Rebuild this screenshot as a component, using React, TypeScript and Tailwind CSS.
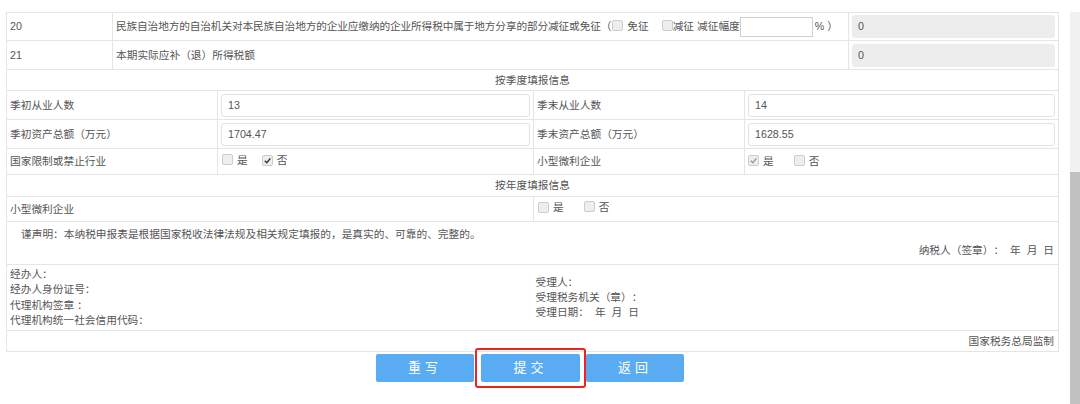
import React from 'react';

const font = { fontFamily: '"Liberation Sans", "Noto Sans CJK SC", sans-serif' };

function Box({ checked = false, dark = false }: { checked?: boolean; dark?: boolean }) {
  return (
    <span className="inline-flex w-[11px] h-[11px] items-center justify-center border border-[#cdcdcd] bg-[#eeeeee] rounded-[2px] align-[-1px]">
      {checked && (
        <svg width="9" height="9" viewBox="0 0 10 10">
          <path
            d="M2 5.2 L4.2 7.4 L8.2 2.6"
            fill="none"
            stroke={dark ? '#333' : '#9a9a9a'}
            strokeWidth="1.6"
          />
        </svg>
      )}
    </span>
  );
}

function Field({ value, grey = false }: { value: string; grey?: boolean }) {
  return (
    <div
      className={`h-[23px] rounded-[3px] px-[6px] flex items-center text-[#555] ${
        grey ? 'bg-[#ededed]' : 'bg-white border border-[#e2e2e2]'
      }`}
    >
      {value}
    </div>
  );
}

const td = 'border border-[#e5e5e5] px-[3px] align-middle';

export default function App() {
  return (
    <div
      className="w-[1080px] h-[404px] flex bg-white text-[10.7px] text-[#555] overflow-hidden [text-spacing-trim:space-all]"
      style={font}
    >
      <div className="w-[1070px] pt-[12px] pl-[6px] pr-[12px]">
        <table className="w-[1052px] table-fixed border-collapse">
          <colgroup>
            <col className="w-[106px]" />
            <col className="w-[105px]" />
            <col className="w-[316px]" />
            <col className="w-[211px]" />
            <col className="w-[104px]" />
            <col className="w-[210px]" />
          </colgroup>
          <tbody>
            {/* 第20、21行 */}
            <tr className="h-[28px]">
              <td className={td}>20</td>
              <td className={td} colSpan={4}>
                <div className="flex items-center whitespace-nowrap">
                  <span className="tracking-[-0.15px]">民族自治地方的自治机关对本民族自治地方的企业应缴纳的企业所得税中属于地方分享的部分减征或免征（</span>
                  <span className="ml-[1px] mr-[4px]"><Box /></span>
                  <span>免征</span>
                  <span className="ml-[13px]"><Box /></span>
                  <span>减征 减征幅度</span>
                  <span className="w-[73px] h-[20px] border border-[#cfcfcf] bg-white" />
                  <span className="ml-[2px]">% ）</span>
                </div>
              </td>
              <td className={td}>
                <Field value="0" grey />
              </td>
            </tr>
            <tr className="h-[29px]">
              <td className={td}>21</td>
              <td className={td} colSpan={4}>本期实际应补（退）所得税额</td>
              <td className={td}>
                <Field value="0" grey />
              </td>
            </tr>

            {/* 按季度填报信息 */}
            <tr className="h-[21px]">
              <td className={`${td} text-center`} colSpan={6}>按季度填报信息</td>
            </tr>
            <tr className="h-[29px]">
              <td className={td} colSpan={2}>季初从业人数</td>
              <td className={td}><Field value="13" /></td>
              <td className={td}>季末从业人数</td>
              <td className={td} colSpan={2}><Field value="14" /></td>
            </tr>
            <tr className="h-[29px]">
              <td className={td} colSpan={2}>季初资产总额（万元）</td>
              <td className={td}><Field value="1704.47" /></td>
              <td className={td}>季末资产总额（万元）</td>
              <td className={td} colSpan={2}><Field value="1628.55" /></td>
            </tr>
            <tr className="h-[26px]">
              <td className={td} colSpan={2}>国家限制或禁止行业</td>
              <td className={td}>
                <span className="inline-flex items-center gap-[4px] -mt-[4px] ml-[1px]">
                  <Box /> <span>是</span>
                  <span className="ml-[10px]"><Box checked dark /></span> <span>否</span>
                </span>
              </td>
              <td className={td}>小型微利企业</td>
              <td className={td} colSpan={2}>
                <span className="inline-flex items-center gap-[4px] -mt-[4px]">
                  <Box checked /> <span>是</span>
                  <span className="ml-[16px]"><Box /></span> <span>否</span>
                </span>
              </td>
            </tr>

            {/* 按年度填报信息 */}
            <tr className="h-[22px]">
              <td className={`${td} text-center`} colSpan={6}>按年度填报信息</td>
            </tr>
            <tr className="h-[25px]">
              <td className={td} colSpan={3}>小型微利企业</td>
              <td className={td} colSpan={3}>
                <span className="inline-flex items-center gap-[4px] -mt-[8px] ml-[1px]">
                  <Box /> <span>是</span>
                  <span className="ml-[16px]"><Box /></span> <span>否</span>
                </span>
              </td>
            </tr>

            {/* 声明 */}
            <tr className="h-[43px]">
              <td className={`${td} align-top pt-[5px] leading-[15px]`} colSpan={6}>
                <div className="pl-[11px]">谨声明：本纳税申报表是根据国家税收法律法规及相关规定填报的，是真实的、可靠的、完整的。</div>
                <div className="text-right pr-[1px] pt-[1px]">纳税人（签章）：&nbsp;&nbsp;年&nbsp;&nbsp;月&nbsp;&nbsp;日</div>
              </td>
            </tr>
            <tr className="h-[66px]">
              <td className="border-y border-l border-[#e5e5e5] px-[3px] leading-[15.3px]" colSpan={3}>
                <div>经办人：</div>
                <div>经办人身份证号：</div>
                <div>代理机构签章&nbsp;：</div>
                <div>代理机构统一社会信用代码：</div>
              </td>
              <td className="border-y border-r border-[#e5e5e5] px-[2px] leading-[15px]" colSpan={3}>
                <div>受理人：</div>
                <div>受理税务机关（章）：</div>
                <div>受理日期：&nbsp;&nbsp;年&nbsp;&nbsp;月&nbsp;&nbsp;日</div>
              </td>
            </tr>
            <tr className="h-[21px]">
              <td className={`${td} text-right pr-[4px]`} colSpan={6}>国家税务总局监制</td>
            </tr>
          </tbody>
        </table>

        {/* 按钮 */}
        <div className="flex justify-center items-center mt-[2px] ml-[-4px]">
          <button className="w-[98px] h-[28px] rounded-[2px] bg-[#59acf1] text-white text-[13px] tracking-[4px]">重写</button>
          <div className="ml-[1px] -my-[6px] border-2 border-[#e8261f] rounded-[3px] p-[4px]">
            <button className="w-[99px] h-[28px] rounded-[2px] bg-[#59acf1] text-white text-[13px] tracking-[4px] block">提交</button>
          </div>
          <button className="w-[98px] h-[28px] rounded-[2px] bg-[#59acf1] text-white text-[13px] tracking-[4px]">返回</button>
        </div>
      </div>

      {/* 滚动条 */}
      <div className="w-[10px] mt-[12px] bg-[#f1f1f1] flex flex-col">
        <div className="h-[160px]" />
        <div className="flex-1 bg-[#c1c1c1]" />
      </div>
    </div>
  );
}
